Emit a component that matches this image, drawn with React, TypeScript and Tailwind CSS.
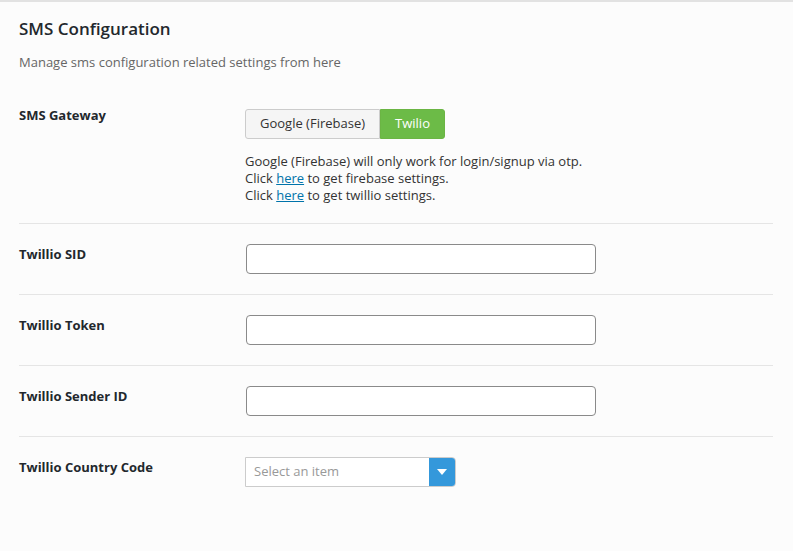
const font = { fontFamily: '"Open Sans", "Noto Sans", sans-serif' };

function Row({ label, children, last = false }: { label: string; children: React.ReactNode; last?: boolean }) {
  return (
    <div className={`flex py-5 ${last ? "" : "border-b border-[#e5e5e5]"}`}>
      <div className="w-[226px] shrink-0 pt-[1px] text-[13px] font-bold text-[#23282d]">{label}</div>
      <div className="flex-1">{children}</div>
    </div>
  );
}

function TextInput() {
  return (
    <input
      type="text"
      className="ml-px block h-[30px] w-[350px] rounded-[4px] border border-[#8a8a8a] bg-white px-2 text-[13px] outline-none"
    />
  );
}

export default function App() {
  return (
    <div className="min-h-[551px] border-t-2 border-[#e2e2e2] bg-[#fcfcfc] text-[#444]" style={font}>
      <div className="pl-[19px] pr-[20px]">
        <h2 className="pt-[14px] text-[17px] font-semibold text-[#23282d]">SMS Configuration</h2>
        <p className="mt-[11px] text-[13px] text-[#666]">Manage sms configuration related settings from here</p>

        {/* gateway switch */}
        <div className="mt-[37px] flex border-b border-[#e5e5e5] pb-[19px]">
          <div className="-mt-[3px] w-[226px] shrink-0 text-[13px] font-bold text-[#23282d]">SMS Gateway</div>
          <div>
            <div className="flex h-[30px] w-fit text-[13px]">
              <button className="rounded-l-[3px] border border-[#cccccc] bg-[#f5f5f5] px-[14px] text-[#333]">
                Google (Firebase)
              </button>
              <button className="rounded-r-[3px] border border-[#6bb544] bg-[#6cbb47] px-[14px] text-white">
                Twilio
              </button>
            </div>
            <div className="mt-[14px] text-[13px] leading-[17px] text-[#333]">
              <p>Google (Firebase) will only work for login/signup via otp.</p>
              <p>
                Click <a href="#" className="text-[#0073aa] underline">here</a> to get firebase settings.
              </p>
              <p>
                Click <a href="#" className="text-[#0073aa] underline">here</a> to get twillio settings.
              </p>
            </div>
          </div>
        </div>

        <Row label="Twillio SID">
          <TextInput />
        </Row>
        <Row label="Twillio Token">
          <TextInput />
        </Row>
        <Row label="Twillio Sender ID">
          <TextInput />
        </Row>
        <Row label="Twillio Country Code" last>
          <div className="flex h-[30px] w-[211px] overflow-hidden rounded-r-[4px] border border-[#cccccc] bg-white">
            <span className="flex flex-1 items-center px-2 text-[13px] text-[#999]">Select an item</span>
            <span className="flex w-[26px] items-center justify-center bg-[#3498db]">
              <svg width="10" height="6" viewBox="0 0 10 6">
                <path d="M0 0h10L5 6z" fill="#fff" />
              </svg>
            </span>
          </div>
        </Row>
      </div>
    </div>
  );
}
